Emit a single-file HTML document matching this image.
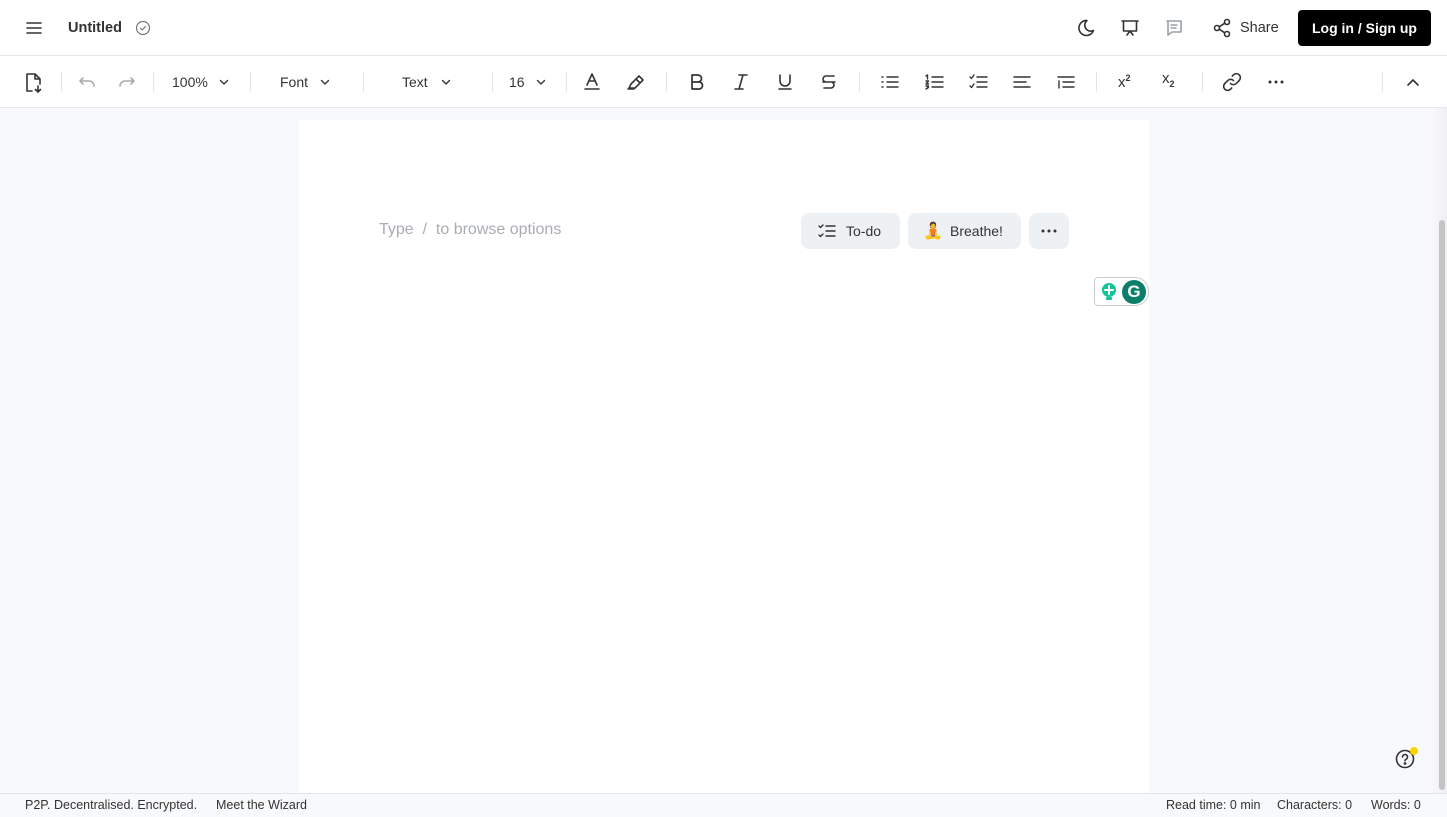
<!DOCTYPE html>
<html><head><meta charset="utf-8"><style>
*{margin:0;padding:0;box-sizing:border-box}
body{width:1447px;height:817px;overflow:hidden;background:#f8f9fb;font-family:"Liberation Sans",sans-serif;color:#1f2328;position:relative}
.a{position:absolute}
svg{position:absolute;fill:none;stroke:#333;stroke-width:1.6;stroke-linecap:round;stroke-linejoin:round}
.t{font-size:14px;color:#333}
.sep{position:absolute;top:72px;width:1px;height:20px;background:#e3e5e8}
.chip{position:absolute;top:213px;height:36px;background:#eef1f4;border-radius:8px;font-size:14px;color:#333}
</style></head><body>
<div class="a" style="left:0;top:0;width:1447px;height:56px;background:#fff;border-bottom:1px solid #e5e7ea"></div>
<div class="a" style="left:0;top:56px;width:1447px;height:52px;background:#fff;border-bottom:1px solid #e5e7ea"></div>
<!-- header -->
<svg style="left:25px;top:20px" width="18" height="16" viewBox="0 0 18 16"><path d="M2 3h14M2 8h14M2 13h14"/></svg>
<div class="a" style="left:68px;top:20px;font-size:14.5px;font-weight:bold;color:#333">Untitled</div>
<svg style="left:135px;top:20px;stroke:#777;stroke-width:1.2" width="16" height="16" viewBox="0 0 16 16"><circle cx="8" cy="8" r="6.5"/><path d="M5.5 8.3l1.8 1.7 3.2-3.5"/></svg>
<svg style="left:1076px;top:18px" width="20" height="20" viewBox="0 0 20 20"><path d="M11 2.5a7.5 7.5 0 1 0 6.5 10A6 6 0 0 1 11 2.5z"/></svg>
<svg style="left:1120px;top:18px" width="20" height="20" viewBox="0 0 20 20"><path d="M2 3h16M3.5 3v10h13V3M7 17l3-4 3 4"/></svg>
<svg style="left:1164px;top:18px;stroke:#9aa0a6" width="20" height="20" viewBox="0 0 20 20"><path d="M3 3h14v11H8l-4 3V3zM7 7h6M7 10h5"/></svg>
<svg style="left:1212px;top:18px" width="20" height="20" viewBox="0 0 20 20"><circle cx="5" cy="10" r="2.5"/><circle cx="15" cy="4" r="2.5"/><circle cx="15" cy="16" r="2.5"/><path d="M7.2 8.8l5.6-3.6M7.2 11.2l5.6 3.6"/></svg>
<div class="a" style="left:1240px;top:20px;font-size:14.5px;color:#333">Share</div>
<div class="a" style="left:1298px;top:10px;width:133px;height:36px;background:#000;border-radius:4px;color:#fff;font-weight:bold;font-size:14px;line-height:36px;text-align:center">Log in / Sign up</div>
<!-- toolbar -->
<svg style="left:24px;top:72px" width="20" height="22" viewBox="0 0 20 22"><path d="M11 2H3v17h5M11 2l5 5v5M11 2v5h5M14 14v6M11.5 17.5l2.5 2.5 2.5-2.5"/></svg>
<div class="sep" style="left:61px"></div>
<svg style="left:78px;top:73px;stroke:#aaa" width="18" height="18" viewBox="0 0 18 18"><path d="M5 5L2 8l3 3M2 8h9a5 5 0 0 1 5 5"/></svg>
<svg style="left:118px;top:73px;stroke:#aaa" width="18" height="18" viewBox="0 0 18 18"><path d="M13 5l3 3-3 3M16 8H7a5 5 0 0 0-5 5"/></svg>
<div class="sep" style="left:153px"></div>
<div class="a t" style="left:172px;top:74px">100%</div>
<svg style="left:218px;top:76px;stroke-width:1.4" width="12" height="12" viewBox="0 0 12 12"><path d="M2.5 4.5L6 8l3.5-3.5"/></svg>
<div class="sep" style="left:250px"></div>
<div class="a t" style="left:280px;top:74px">Font</div>
<svg style="left:319px;top:76px;stroke-width:1.4" width="12" height="12" viewBox="0 0 12 12"><path d="M2.5 4.5L6 8l3.5-3.5"/></svg>
<div class="sep" style="left:363px"></div>
<div class="a t" style="left:402px;top:74px">Text</div>
<svg style="left:440px;top:76px;stroke-width:1.4" width="12" height="12" viewBox="0 0 12 12"><path d="M2.5 4.5L6 8l3.5-3.5"/></svg>
<div class="sep" style="left:492px"></div>
<div class="a t" style="left:509px;top:74px">16</div>
<svg style="left:535px;top:76px;stroke-width:1.4" width="12" height="12" viewBox="0 0 12 12"><path d="M2.5 4.5L6 8l3.5-3.5"/></svg>
<div class="sep" style="left:566px"></div>
<svg style="left:583px;top:72px" width="18" height="20" viewBox="0 0 18 20"><path d="M4 13L9 2l5 11M6 9h6M2 17h14"/></svg>
<svg style="left:626px;top:72px" width="20" height="20" viewBox="0 0 20 20"><path d="M3 16h6l8-8-4-4-8 8-2 4zM10 7l4 4M2 17h6"/></svg>
<div class="sep" style="left:666px"></div>
<svg style="left:688px;top:73px;stroke-width:1.7" width="18" height="18" viewBox="0 0 18 18"><path d="M4 2h6a3.5 3.5 0 0 1 0 7H4zM4 9h7a3.5 3.5 0 0 1 0 7H4z"/></svg>
<svg style="left:732px;top:73px" width="18" height="18" viewBox="0 0 18 18"><path d="M7 2h8M3 16h8M11 2L7 16"/></svg>
<svg style="left:776px;top:73px" width="18" height="18" viewBox="0 0 18 18"><path d="M4 2v6a5 5 0 0 0 10 0V2M3 16h12"/></svg>
<svg style="left:820px;top:73px" width="18" height="18" viewBox="0 0 18 18"><path d="M14 3H6a3 3 0 0 0 0 6M3 9h12M11 9a3 3 0 0 1 0 6H4"/></svg>
<div class="sep" style="left:859px"></div>
<svg style="left:880px;top:73px;stroke-width:1.4" width="20" height="18" viewBox="0 0 20 18"><path d="M7 4h11M7 9h11M7 14h11M2 4h1M2 9h1M2 14h1"/></svg>
<svg style="left:924px;top:73px;stroke-width:1.4" width="20" height="18" viewBox="0 0 20 18"><path d="M8 4h11M8 9h11M8 14h11M2 3l1.5-1v4M2 8h2.5L2 11h2.5M2 13h2.5l-1 1.5h1L2 16"/></svg>
<svg style="left:968px;top:73px;stroke-width:1.4" width="20" height="18" viewBox="0 0 20 18"><path d="M9 4h10M9 9h10M9 14h10M2 4l1.5 1.5L6 2M2 13l1.5 1.5L6 11"/></svg>
<svg style="left:1012px;top:73px;stroke-width:1.4" width="20" height="18" viewBox="0 0 20 18"><path d="M2 4h16M2 9h12M2 14h16"/></svg>
<svg style="left:1056px;top:73px;stroke-width:1.4" width="20" height="18" viewBox="0 0 20 18"><path d="M2 4h16M7 9h11M7 14h11M3 8v7"/></svg>
<div class="sep" style="left:1096px"></div>
<div class="a" style="left:1118px;top:73px;font-size:15px;color:#333">x<sup style="font-size:9px;font-weight:bold">2</sup></div>
<div class="a" style="left:1162px;top:70px;font-size:15px;color:#333">x<sub style="font-size:9px;font-weight:bold">2</sub></div>
<div class="sep" style="left:1202px"></div>
<svg style="left:1222px;top:72px" width="20" height="20" viewBox="0 0 20 20"><path d="M8.5 11.5a4 4 0 0 0 5.7 0l3-3a4 4 0 0 0-5.7-5.7l-1.2 1.2M11.5 8.5a4 4 0 0 0-5.7 0l-3 3a4 4 0 0 0 5.7 5.7l1.2-1.2"/></svg>
<svg style="left:1266px;top:73px;fill:#333;stroke:none" width="20" height="18" viewBox="0 0 20 18"><circle cx="4" cy="9" r="1.5"/><circle cx="10" cy="9" r="1.5"/><circle cx="16" cy="9" r="1.5"/></svg>
<div class="sep" style="left:1382px"></div>
<svg style="left:1405px;top:75px;stroke-width:1.6" width="16" height="14" viewBox="0 0 16 14"><path d="M3 10l5-5 5 5"/></svg>
<!-- page -->
<div class="a" style="left:299px;top:120px;width:850px;height:673px;background:#fff"></div>
<div class="a" style="left:1430px;top:108px;width:17px;height:685px;background:linear-gradient(90deg,#f8f9fb,#eff0f2)"></div>
<div class="a" style="left:1439px;top:220px;width:6px;height:570px;background:#c4c4c4;border-radius:3px"></div>
<div class="a" style="left:379px;top:221px;font-size:16px;color:#a9adb2">Type &nbsp;/ &nbsp;to browse options</div>
<div class="chip" style="left:801px;width:99px">
<svg style="left:17px;top:11px;stroke-width:1.4" width="18" height="14" viewBox="0 0 18 14"><path d="M8 2h9M8 7h9M8 12h9M1 2l1.5 1.5L5 1M1 11l1.5 1.5L5 10"/></svg>
<span class="a" style="left:45px;top:10px">To-do</span></div>
<div class="chip" style="left:908px;width:113px"><span class="a" style="left:15px;top:8px;font-size:16px">🧘</span><span class="a" style="left:42px;top:10px">Breathe!</span></div>
<div class="chip" style="left:1029px;width:40px"><svg style="left:11px;top:15px;fill:#333;stroke:none" width="18" height="6" viewBox="0 0 18 6"><circle cx="3" cy="3" r="1.5"/><circle cx="9" cy="3" r="1.5"/><circle cx="15" cy="3" r="1.5"/></svg></div>
<div class="a" style="left:1094px;top:277px;width:55px;height:29px;border:1px solid #ccc;border-radius:4px 14px 14px 4px;background:#fff"></div>
<svg style="left:1100px;top:282px;fill:#15c39a;stroke:none" width="18" height="20" viewBox="0 0 18 20"><circle cx="9" cy="8" r="7"/><rect x="6" y="15" width="6" height="3" rx="1"/><path d="M9 4v8M5 8h8" stroke="#fff" stroke-width="2"/></svg>
<div class="a" style="left:1122px;top:280px;width:24px;height:24px;border-radius:50%;background:#0b7f6a;color:#fff;font-weight:bold;font-size:17px;text-align:center;line-height:24px">G</div>
<svg style="left:1395px;top:749px;stroke-width:1.6" width="20" height="20" viewBox="0 0 20 20"><circle cx="10" cy="10" r="8.5"/><path d="M7.5 8a2.5 2.5 0 1 1 3.5 2.3c-.7.3-1 .8-1 1.5"/><circle cx="10" cy="14.5" r=".6" fill="#333"/></svg>
<div class="a" style="left:1410px;top:747px;width:8px;height:8px;border-radius:50%;background:#fbd500"></div>
<!-- footer -->
<div class="a" style="left:0;top:793px;width:1447px;height:24px;background:#f8f9fb;border-top:1px solid #e3e5e8;font-size:12.5px;color:#333">
<span class="a" style="left:25px;top:4px">P2P. Decentralised. Encrypted.</span>
<span class="a" style="left:216px;top:4px">Meet the Wizard</span>
<span class="a" style="left:1166px;top:4px">Read time: 0 min</span>
<span class="a" style="left:1277px;top:4px">Characters: 0</span>
<span class="a" style="left:1371px;top:4px">Words: 0</span>
</div>
</body></html>
